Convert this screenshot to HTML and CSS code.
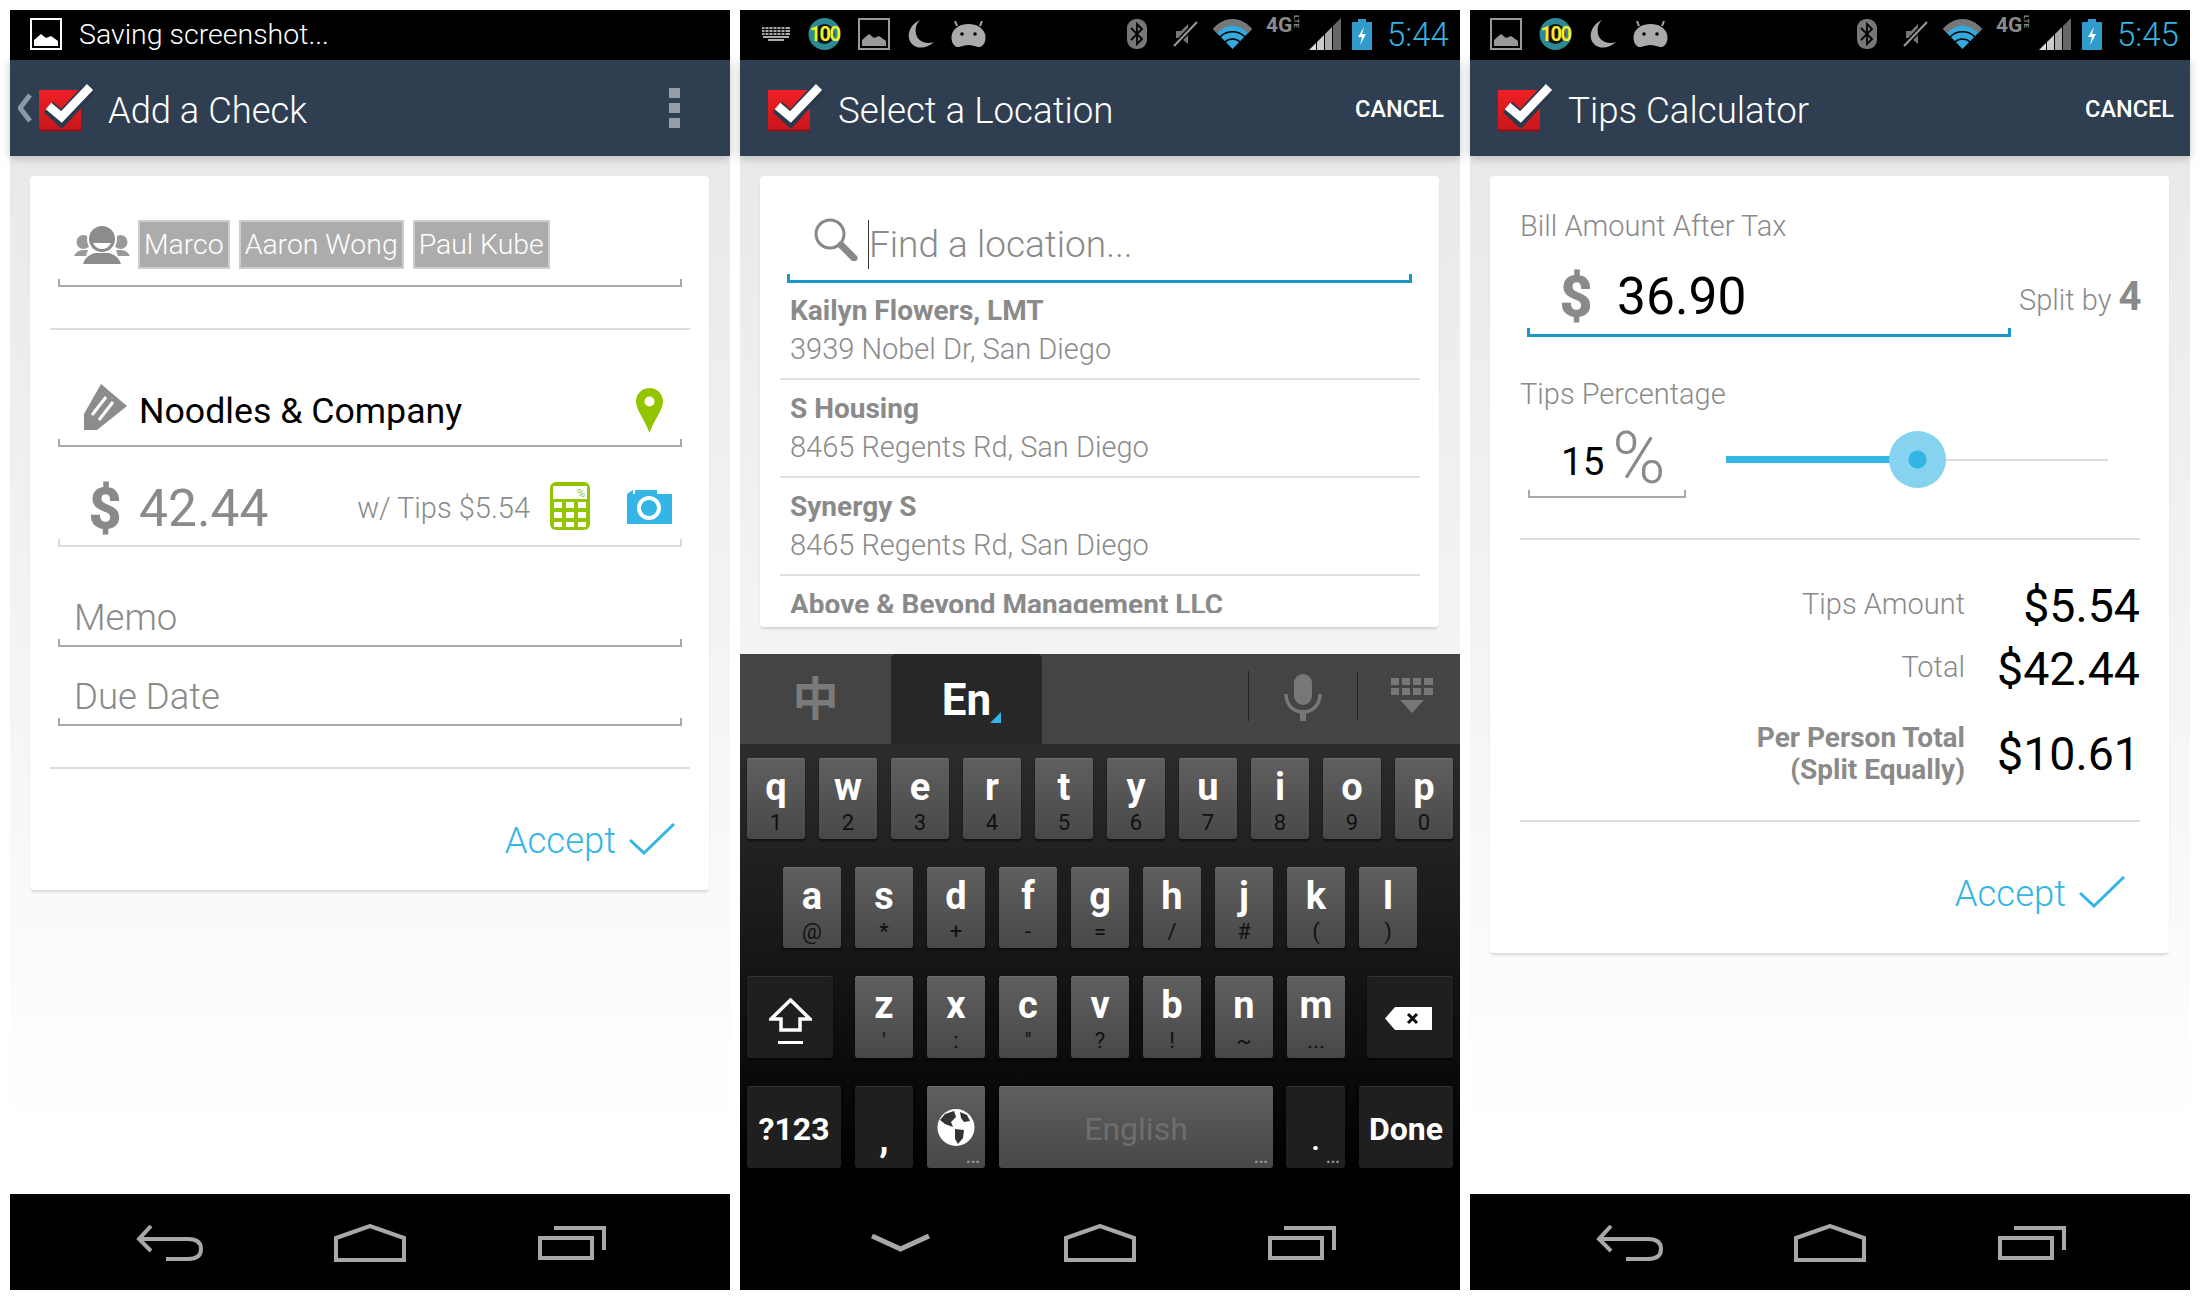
FILE: index.html
```html
<!DOCTYPE html>
<html lang="en">
<head>
<meta charset="UTF-8">
<meta name="viewport" content="width=device-width, initial-scale=1.0">
<title>Check app screens</title>
<link rel="stylesheet" href="styles.css">
</head>
<body>

<!-- shared icons -->
<svg class="defs" aria-hidden="true">
  <defs>
    <linearGradient id="red" x1="0" y1="0" x2="0" y2="1">
      <stop offset="0" stop-color="#ee2024"/>
      <stop offset="1" stop-color="#c8161b"/>
    </linearGradient>
    <symbol id="i-logo" viewBox="0 0 56 48">
      <rect x="0" y="6" width="42" height="41" fill="url(#red)"/>
      <path d="M0 46.5h42" stroke="#8c1216" stroke-width="2"/>
      <path d="M9.5 23 L22.5 35 L51 4" fill="none" stroke="#2a3a4c" stroke-width="14"/>
      <path d="M9.5 22 L22.5 33 L51 3" fill="none" stroke="#fff" stroke-width="8.5"/>
    </symbol>
    <symbol id="i-image" viewBox="0 0 32 32">
      <rect x="1" y="1" width="30" height="30" fill="none" stroke="currentColor" stroke-width="2"/>
      <path d="M4 28 V22 L11 16 L16 20 L21 18 L28 23 V28 Z" fill="currentColor"/>
    </symbol>
    <symbol id="i-100" viewBox="0 0 33 32">
      <circle cx="16.500" cy="16" r="16" fill="#2c8a96"/>
      <circle cx="16.500" cy="16" r="10" fill="#111"/>
      <text x="16.500" y="23" text-anchor="middle" class="badge-text">100</text>
    </symbol>
    <symbol id="i-moon" viewBox="0 0 27 28">
      <path d="M13 0 C3 4 -2 17 5 24 C11 30 21 28 27 22 C18 25 11 21 9 14 C8 8 9 4 13 0 Z" fill="#aaa"/>
    </symbol>
    <symbol id="i-droid" viewBox="0 0 35 27">
      <path d="M6 5 L4 0 M29 5 L31 0" stroke="#aaa" stroke-width="2"/>
      <path d="M17.500 3 C26 3 32 7 34 13 C36 20 32 27 27 26 C23 25 21 24 17.500 24 C14 24 12 25 8 26 C3 27 -1 20 1 13 C3 7 9 3 17.500 3 Z" fill="#aaa"/>
      <circle cx="11" cy="13" r="1.800" fill="#000"/>
      <circle cx="24" cy="13" r="1.800" fill="#000"/>
    </symbol>
    <symbol id="i-bt" viewBox="0 0 20 30">
      <rect x="0" y="0" width="20" height="30" rx="9" fill="#777"/>
      <path d="M4 9 L15 20 L10 25 V5 L15 10 L4 21" fill="none" stroke="#000" stroke-width="1.800"/>
    </symbol>
    <symbol id="i-mute" viewBox="0 0 25 26">
      <path d="M3 10 H8 L15 3 V23 L8 17 H3 Z" fill="#777"/>
      <path d="M1 25 L24 1" stroke="#000" stroke-width="5"/>
      <path d="M1 25 L24 1" stroke="#999" stroke-width="2"/>
    </symbol>
    <symbol id="i-wifi" viewBox="0 0 39 30">
      <path d="M19.500 30 L0 10 C11 -3 28 -3 39 10 Z" fill="#33a9dc"/>
      <path d="M0 10 C11 -3 28 -3 39 10 L35 14 C25 4 14 4 4 14 Z" fill="#777"/>
      <path d="M7 18 C14 11 25 11 32 18 M12 23 C16 19 23 19 27 23" fill="none" stroke="#000" stroke-width="1.500"/>
    </symbol>
    <symbol id="i-signal" viewBox="0 0 32 32">
      <path d="M0 32 L7 25 V32 Z" fill="#ddd"/>
      <path d="M8 24 L15 17 V32 H8 Z" fill="#ccc"/>
      <path d="M16 16 L23 9 V32 H16 Z" fill="#aaa"/>
      <path d="M24 8 L32 0 V32 H24 Z" fill="#666"/>
    </symbol>
    <symbol id="i-battery" viewBox="0 0 20 31">
      <path d="M6 0 H14 V3 H20 V31 H0 V3 H6 Z" fill="#319ccb"/>
      <path d="M12 8 L6 18 H10 L8 26 L14 15 H10 Z" fill="#fff"/>
    </symbol>
    <symbol id="i-back" viewBox="0 0 68 36">
      <path d="M15 1 L3 14 L15 26 M3 14 H52 Q65 14 65 24 Q65 34 52 34 H30" fill="none" stroke="#a8a8a8" stroke-width="4"/>
    </symbol>
    <symbol id="i-home" viewBox="0 0 72 38">
      <path d="M2 36 V14 L36 2 L70 14 V36 Z" fill="none" stroke="#a8a8a8" stroke-width="4"/>
    </symbol>
    <symbol id="i-recent" viewBox="0 0 68 34">
      <rect x="2" y="12" width="52" height="20" fill="none" stroke="#a8a8a8" stroke-width="4"/>
      <path d="M16 2 H66 V24" fill="none" stroke="#a8a8a8" stroke-width="4"/>
    </symbol>
    <symbol id="i-check" viewBox="0 0 46 32">
      <path d="M1 17 L15 30 L45 1" fill="none" stroke="#33b5e5" stroke-width="3"/>
    </symbol>
    <symbol id="i-dollar" viewBox="0 0 34 55">
      <text x="17" y="47" text-anchor="middle" class="dollar-text">$</text>
    </symbol>
  </defs>
</svg>

<div class="phones">

  <!-- add a check -->
  <div class="phone">
    <div class="status">
      <svg class="ic-image status-white"><use href="#i-image"/></svg>
      <span class="status-note">Saving screenshot...</span>
    </div>
    <header class="actionbar">
      <svg class="up-arrow" viewBox="0 0 15 28"><path d="M12 1 L2 14 L12 27" fill="none" stroke="#8b97a3" stroke-width="5"/></svg>
      <svg class="logo"><use href="#i-logo"/></svg>
      <h1 class="title title-up">Add a Check</h1>
      <div class="overflow"><i></i><i></i><i></i></div>
    </header>
    <main class="content">
      <section class="card card-check">
        <div class="field field-people">
          <svg class="ic-people" viewBox="0 0 56 38">
            <circle cx="9.500" cy="16" r="7" fill="#999"/>
            <circle cx="46.500" cy="16" r="7" fill="#999"/>
            <path d="M0 30 Q3 24 9 24 L14 24 L12 30 Z M56 30 Q53 24 47 24 L42 24 L44 30 Z" fill="#999"/>
            <circle cx="28" cy="13" r="15" fill="#fff"/>
            <circle cx="28" cy="13" r="13" fill="#8c8c8c"/>
            <path d="M19 17 H37 Q34 23 28 23 Q22 23 19 17 Z" fill="#fff"/>
            <path d="M9 38 Q12 29 21 27 L35 27 Q44 29 47 38 Z" fill="#8c8c8c"/>
          </svg>
          <span class="chip">Marco</span>
          <span class="chip">Aaron Wong</span>
          <span class="chip">Paul Kube</span>
        </div>
        <hr class="divider divider-people">
        <div class="field field-place">
          <svg class="ic-tag" viewBox="0 0 43 46">
            <path d="M17 0 L43 22 L13 46 H0 V30 Z" fill="#8c8c8c"/>
            <path d="M8 31 L22 13 M15 36 L29 18" stroke="#fff" stroke-width="3"/>
          </svg>
          <span class="place-name">Noodles &amp; Company</span>
          <svg class="ic-pin" viewBox="0 0 27 45">
            <path d="M13.500 0 C21 0 27 6 27 13.500 C27 22 18 32 13.500 45 C9 32 0 22 0 13.500 C0 6 6 0 13.500 0 Z" fill="#93c400"/>
            <circle cx="13.500" cy="13.500" r="5" fill="#fff"/>
          </svg>
        </div>
        <div class="field field-amount">
          <svg class="ic-dollar"><use href="#i-dollar"/></svg>
          <span class="amount-value">42.44</span>
          <span class="amount-tips">w/ Tips $5.54</span>
          <svg class="ic-calc" viewBox="0 0 40 48">
            <rect width="40" height="48" rx="6" fill="#93c400"/>
            <rect x="3" y="4" width="34" height="13" fill="#fff"/>
            <text x="31" y="15" text-anchor="middle" class="calc-text">%</text>
            <g fill="#fff">
              <rect x="4" y="20" width="8" height="6"/><rect x="16" y="20" width="8" height="6"/><rect x="28" y="20" width="8" height="6"/>
              <rect x="4" y="30" width="8" height="6"/><rect x="16" y="30" width="8" height="6"/><rect x="28" y="30" width="8" height="6"/>
              <rect x="4" y="40" width="8" height="5"/><rect x="16" y="40" width="8" height="5"/><rect x="28" y="40" width="8" height="5"/>
            </g>
          </svg>
          <svg class="ic-camera" viewBox="0 0 45 35">
            <path d="M0 5 L6 1 V5 H8 V1 H30 V5 H45 V35 H0 Z" fill="#33b5e5"/>
            <circle cx="22" cy="19" r="10" fill="#33b5e5" stroke="#fff" stroke-width="4"/>
          </svg>
        </div>
        <div class="field field-text field-memo">Memo</div>
        <div class="field field-text field-due">Due Date</div>
        <hr class="divider divider-due">
        <div class="accept accept-check">Accept <svg class="ic-check"><use href="#i-check"/></svg></div>
      </section>
    </main>
    <nav class="navbar">
      <span class="nav-slot"><svg class="ic-back"><use href="#i-back"/></svg></span>
      <span class="nav-slot"><svg class="ic-home"><use href="#i-home"/></svg></span>
      <span class="nav-slot"><svg class="ic-recent"><use href="#i-recent"/></svg></span>
    </nav>
  </div>

  <!-- select a location -->
  <div class="phone">
    <div class="status">
      <svg class="ic-keys" viewBox="0 0 28 14">
        <g fill="#aaa">
          <rect width="28" height="2"/><rect y="3" width="28" height="2"/><rect y="6" width="28" height="2"/><rect x="1" y="9" width="26" height="2"/><rect x="6" y="12" width="16" height="2"/>
        </g>
        <path d="M3 0V9M7 0V9M11 0V9M15 0V9M19 0V9M23 0V9" stroke="#000"/>
      </svg>
      <svg class="ic-100"><use href="#i-100"/></svg>
      <svg class="ic-image"><use href="#i-image"/></svg>
      <svg class="ic-moon"><use href="#i-moon"/></svg>
      <svg class="ic-droid"><use href="#i-droid"/></svg>
      <div class="status-right">
        <svg class="ic-bt"><use href="#i-bt"/></svg>
        <svg class="ic-mute"><use href="#i-mute"/></svg>
        <svg class="ic-wifi"><use href="#i-wifi"/></svg>
        <span class="net">4G<small>LTE</small></span>
        <svg class="ic-signal"><use href="#i-signal"/></svg>
        <svg class="ic-battery"><use href="#i-battery"/></svg>
        <span class="clock">5:44</span>
      </div>
    </div>
    <header class="actionbar">
      <svg class="logo"><use href="#i-logo"/></svg>
      <h1 class="title">Select a Location</h1>
      <span class="cancel">CANCEL</span>
    </header>
    <main class="content">
      <section class="card card-location">
        <div class="field field-active field-search">
          <svg class="ic-search" viewBox="0 0 44 43">
            <circle cx="16" cy="16" r="14" fill="none" stroke="#888" stroke-width="3"/>
            <path d="M27 27 L40 40" stroke="#888" stroke-width="7" stroke-linecap="round"/>
          </svg>
          <span class="search-text">Find a location...</span>
        </div>
        <ul class="results">
          <li><b>Kailyn Flowers, LMT</b><span>3939 Nobel Dr, San Diego</span></li>
          <li><b>S Housing</b><span>8465 Regents Rd, San Diego</span></li>
          <li><b>Synergy S</b><span>8465 Regents Rd, San Diego</span></li>
          <li><b>Above &amp; Beyond Management LLC</b></li>
        </ul>
      </section>
    </main>
    <div class="keyboard">
      <div class="kb-bar">
        <span class="kb-tab kb-zh">中</span>
        <span class="kb-tab kb-en">En</span>
        <span class="kb-sep kb-sep-first"></span>
        <svg class="ic-mic" viewBox="0 0 38 47">
          <rect x="10" y="0" width="18" height="31" rx="9" fill="#777"/>
          <path d="M2 20 C2 44 36 44 36 20" fill="none" stroke="#777" stroke-width="3.500"/>
          <rect x="16" y="36" width="6" height="11" fill="#777"/>
        </svg>
        <span class="kb-sep kb-sep-last"></span>
        <svg class="ic-hide" viewBox="0 0 42 35">
          <g fill="#777">
            <rect width="8" height="7"/><rect x="11" width="8" height="7"/><rect x="22" width="8" height="7"/><rect x="33" width="9" height="7"/>
            <rect y="10" width="8" height="7"/><rect x="11" y="10" width="8" height="7"/><rect x="22" y="10" width="8" height="7"/><rect x="33" y="10" width="9" height="7"/>
            <path d="M9 22 H33 L21 35 Z"/>
          </g>
        </svg>
      </div>
      <div class="kb-keys">
        <div class="kb-row">
          <span class="key">q<small>1</small></span><span class="key">w<small>2</small></span><span class="key">e<small>3</small></span><span class="key">r<small>4</small></span><span class="key">t<small>5</small></span><span class="key">y<small>6</small></span><span class="key">u<small>7</small></span><span class="key">i<small>8</small></span><span class="key">o<small>9</small></span><span class="key">p<small>0</small></span>
        </div>
        <div class="kb-row kb-row-home">
          <span class="key">a<small>@</small></span><span class="key">s<small>*</small></span><span class="key">d<small>+</small></span><span class="key">f<small>-</small></span><span class="key">g<small>=</small></span><span class="key">h<small>/</small></span><span class="key">j<small>#</small></span><span class="key">k<small>(</small></span><span class="key">l<small>)</small></span>
        </div>
        <div class="kb-row kb-row-tall">
          <span class="key key-dark key-shift">
            <svg class="ic-shift" viewBox="0 0 43 46">
              <path d="M21.500 2 L41 21 H31 V32 H12 V21 H2 Z" fill="none" stroke="#fff" stroke-width="3.500"/>
              <rect x="9" y="43" width="25" height="3" fill="#fff"/>
            </svg>
          </span>
          <span class="key">z<small>'</small></span><span class="key">x<small>:</small></span><span class="key">c<small>"</small></span><span class="key">v<small>?</small></span><span class="key">b<small>!</small></span><span class="key">n<small>~</small></span><span class="key">m<small>...</small></span>
          <span class="key key-dark key-del">
            <svg class="ic-del" viewBox="0 0 47 23">
              <path d="M10 0 H47 V23 H10 L0 11.500 Z" fill="#fff"/>
              <path d="M23 7 L32 16 M32 7 L23 16" stroke="#111" stroke-width="3"/>
            </svg>
          </span>
        </div>
        <div class="kb-row kb-row-tall">
          <span class="key key-dark key-wide">?123</span>
          <span class="key key-dark key-comma">,</span>
          <span class="key key-globe">
            <svg class="ic-globe" viewBox="0 0 38 37">
              <circle cx="19" cy="18.500" r="18.500" fill="#fff"/>
              <path d="M8 5 L17 2 L19 8 L14 13 L16 18 L8 15 L3 11 Z M18 20 L27 21 L26 29 L21 35 L18 30 Z M23 3 L30 6 L33 12 L27 13 L24 9 Z" fill="#333"/>
            </svg>
            <em class="more">...</em>
          </span>
          <span class="key key-space">English<em class="more">...</em></span>
          <span class="key key-dark key-period">.<em class="more">...</em></span>
          <span class="key key-dark key-wide">Done</span>
        </div>
      </div>
    </div>
    <nav class="navbar">
      <span class="nav-slot">
        <svg class="ic-down" viewBox="0 0 59 18"><path d="M1 2 L29.500 15 L58 2" fill="none" stroke="#a8a8a8" stroke-width="5"/></svg>
      </span>
      <span class="nav-slot"><svg class="ic-home"><use href="#i-home"/></svg></span>
      <span class="nav-slot"><svg class="ic-recent"><use href="#i-recent"/></svg></span>
    </nav>
  </div>

  <!-- tips calculator -->
  <div class="phone">
    <div class="status">
      <svg class="ic-image"><use href="#i-image"/></svg>
      <svg class="ic-100"><use href="#i-100"/></svg>
      <svg class="ic-moon"><use href="#i-moon"/></svg>
      <svg class="ic-droid"><use href="#i-droid"/></svg>
      <div class="status-right">
        <svg class="ic-bt"><use href="#i-bt"/></svg>
        <svg class="ic-mute"><use href="#i-mute"/></svg>
        <svg class="ic-wifi"><use href="#i-wifi"/></svg>
        <span class="net">4G<small>LTE</small></span>
        <svg class="ic-signal"><use href="#i-signal"/></svg>
        <svg class="ic-battery"><use href="#i-battery"/></svg>
        <span class="clock">5:45</span>
      </div>
    </div>
    <header class="actionbar">
      <svg class="logo"><use href="#i-logo"/></svg>
      <h1 class="title">Tips Calculator</h1>
      <span class="cancel">CANCEL</span>
    </header>
    <main class="content">
      <section class="card card-tips">
        <div class="tips-label tips-label-bill">Bill Amount After Tax</div>
        <div class="bill-row">
          <div class="field field-active field-bill">
            <svg class="ic-dollar"><use href="#i-dollar"/></svg>
            <span class="bill-value">36.90</span>
          </div>
          <div class="split">Split by <b>4</b></div>
        </div>
        <div class="tips-label tips-label-pct">Tips Percentage</div>
        <div class="pct-row">
          <div class="field field-pct">
            <span class="pct-value">15</span><span class="pct-sign">%</span>
          </div>
          <div class="slider">
            <span class="slider-fill"></span>
            <span class="slider-rest"></span>
            <span class="slider-thumb"></span>
          </div>
        </div>
        <hr class="divider divider-tips">
        <div class="summary">
          <span class="sum-label">Tips Amount</span><span class="sum-value">$5.54</span>
          <span class="sum-label">Total</span><span class="sum-value">$42.44</span>
          <span class="sum-label sum-person">Per Person Total<br>(Split Equally)</span><span class="sum-value sum-person-value">$10.61</span>
        </div>
        <hr class="divider divider-tips divider-summary">
        <div class="accept accept-tips">Accept <svg class="ic-check"><use href="#i-check"/></svg></div>
      </section>
    </main>
    <nav class="navbar">
      <span class="nav-slot"><svg class="ic-back"><use href="#i-back"/></svg></span>
      <span class="nav-slot"><svg class="ic-home"><use href="#i-home"/></svg></span>
      <span class="nav-slot"><svg class="ic-recent"><use href="#i-recent"/></svg></span>
    </nav>
  </div>

</div>
</body>
</html>
```

FILE: styles.css
```css
:root {
  --bar: #2f3f51;
  --blue: #33b5e5;
  --green: #93c400;
  --grey-text: #8a8a8a;
  --rule: #dcdcdc;
}

body {
  margin: 0;
  padding: 10px;
  background: #fff;
  font-family: Roboto, "Liberation Sans", "Noto Sans CJK SC", sans-serif;
}

.defs {
  display: block;
  width: 0;
  height: 0;
}

.phones {
  display: flex;
  gap: 10px;
}

.phone {
  width: 720px;
  height: 1280px;
  display: flex;
  flex-direction: column;
  background: linear-gradient(#e9e9e9 146px, #f3f3f3 600px, #fff 1130px);
}

/* status bar */
.status {
  height: 50px;
  flex: none;
  display: flex;
  align-items: center;
  gap: 17px;
  padding-left: 20px;
  padding-bottom: 2px;
  box-sizing: border-box;
  background: #000;
  color: #999;
}

.status-note {
  color: #fff;
  font-size: 28.500px;
  font-weight: 300;
}

.status-white {
  color: #fff;
}

.status-right {
  margin-left: auto;
  padding-right: 13px;
  display: flex;
  align-items: center;
}

.ic-image { width: 32px; height: 32px; }
.ic-100 { width: 33px; height: 32px; }
.ic-moon { width: 27px; height: 28px; }
.ic-droid { width: 35px; height: 27px; }
.ic-keys { width: 28px; height: 14px; margin-left: 2px; margin-right: 1px; }
.ic-bt { width: 20px; height: 30px; }
.ic-mute { width: 25px; height: 26px; margin-left: 26px; }
.ic-wifi { width: 39px; height: 30px; margin-left: 15px; }
.ic-signal { width: 32px; height: 32px; margin-left: 5px; }
.ic-battery { width: 20px; height: 31px; margin-left: 11px; }

.badge-text {
  fill: #f5ee2a;
  font-size: 20px;
  font-weight: 700;
  letter-spacing: -1.500px;
}

.net {
  width: 38px;
  margin-left: 14px;
  align-self: flex-start;
  display: flex;
  color: #8a8a8a;
  font-size: 21px;
  font-weight: 700;
  line-height: 20px;
}

.net small {
  writing-mode: vertical-rl;
  font-size: 8px;
  line-height: 9px;
  letter-spacing: 0;
}

.clock {
  width: 60px;
  margin-left: 15px;
  color: var(--blue);
  font-size: 33px;
  font-weight: 300;
  white-space: nowrap;
}

/* action bar */
.actionbar {
  position: relative;
  height: 96px;
  flex: none;
  display: flex;
  align-items: center;
  padding-left: 28px;
  padding-right: 12px;
  background: var(--bar);
  box-shadow: 0 2px 9px rgba(0, 0, 0, 0.22);
  color: #fff;
}

.logo {
  width: 56px;
  height: 48px;
  flex: none;
}

.title {
  margin: 4px 0 0 14px;
  font-size: 36.700px;
  font-weight: 300;
}

.title-up {
  margin-left: 13px;
  font-size: 36.300px;
}

.up-arrow {
  width: 15px;
  height: 28px;
  margin-left: -20px;
  margin-right: 6px;
}

.overflow {
  margin-left: auto;
  margin-right: 38px;
  display: flex;
  flex-direction: column;
  gap: 5px;
}

.overflow i {
  display: block;
  width: 11px;
  height: 10px;
  background: #949ca6;
}

.cancel {
  margin-left: auto;
  margin-top: 2px;
  margin-right: 4px;
  font-size: 23.500px;
  font-weight: 500;
}

/* cards and fields */
.content {
  padding: 20px 21px 0 20px;
}

.card {
  background: #fff;
  border-radius: 4px;
  box-shadow: 0 3px 3px -1px rgba(0, 0, 0, 0.14);
  overflow: hidden;
}

.divider {
  height: 2px;
  margin: 0 19px 0 20px;
  border: 0;
  background: var(--rule);
}

.field {
  --line: #a9a9a9;
  --line-w: 2px;
  --tick: 8px;
  display: flex;
  align-items: center;
  box-sizing: border-box;
  background:
    linear-gradient(var(--line), var(--line)) left bottom / var(--line-w) var(--tick) no-repeat,
    linear-gradient(var(--line), var(--line)) right bottom / var(--line-w) var(--tick) no-repeat,
    linear-gradient(var(--line), var(--line)) left bottom / 100% var(--line-w) no-repeat;
}

.field-active {
  --line: #1a97c6;
  --line-w: 3px;
  --tick: 9px;
}

.card-check .field {
  margin: 0 27px 0 28px;
}

.card-check .field-people {
  margin-top: 44px;
  height: 67px;
  padding-left: 16px;
  align-items: flex-start;
  gap: 9px;
}

.ic-people {
  width: 56px;
  height: 38px;
  margin-top: 6px;
  margin-right: -1px;
}

.chip {
  height: 49px;
  padding: 0 4px;
  box-sizing: border-box;
  border: 2px solid #cdcdcd;
  background: #acacac;
  color: #fff;
  font-size: 28.400px;
  font-weight: 300;
  line-height: 45px;
}

.divider-people {
  margin-top: 41px;
}

.card-check .field-place {
  margin-top: 45px;
  height: 72px;
  padding-left: 26px;
  padding-right: 19px;
}

.ic-tag {
  width: 43px;
  height: 46px;
  flex: none;
  margin-bottom: 8px;
}

.place-name {
  margin-left: 12px;
  color: #000;
  font-size: 35.700px;
  font-weight: 400;
}

.ic-pin {
  width: 27px;
  height: 45px;
  margin-left: auto;
  margin-bottom: 2px;
}

.card-check .field-amount {
  --line: #dcdcdc;
  margin-top: 10px;
  height: 90px;
  padding-left: 30px;
  padding-top: 12px;
}

.ic-dollar {
  width: 34px;
  height: 55px;
  flex: none;
}

.dollar-text {
  fill: #8a8a8a;
  stroke: #8a8a8a;
  stroke-width: 1.200px;
  font-size: 56px;
  font-weight: 700;
}

.amount-value {
  margin-left: 17px;
  color: #8a8a8a;
  font-size: 51.500px;
  font-weight: 400;
}

.amount-tips {
  margin-left: auto;
  color: var(--grey-text);
  font-size: 29px;
  font-weight: 300;
}

.ic-calc {
  width: 40px;
  height: 48px;
  margin-left: 20px;
  margin-bottom: 4px;
}

.calc-text {
  fill: var(--green);
  font-size: 11px;
}

.ic-camera {
  width: 45px;
  height: 35px;
  margin-left: 37px;
  margin-right: 10px;
  margin-bottom: 4px;
}

.field-text {
  align-items: flex-end;
  padding-left: 16px;
  padding-bottom: 8px;
  color: var(--grey-text);
  font-size: 36.500px;
  font-weight: 300;
}

.card-check .field-memo {
  height: 100px;
}

.card-check .field-due {
  height: 79px;
}

.divider-due {
  margin-top: 41px;
}

.accept {
  display: flex;
  justify-content: flex-end;
  align-items: center;
  gap: 13px;
  color: var(--blue);
  font-size: 36.500px;
  font-weight: 300;
  line-height: 42px;
}

.accept-check {
  padding: 51px 34px 28px 0;
}

.ic-check {
  width: 46px;
  height: 32px;
  margin-bottom: 4px;
}

/* location search */
.card-location {
  padding-bottom: 14px;
}

.field-search {
  margin: 34px 27px 0;
  height: 73px;
  padding-left: 27px;
  padding-bottom: 4px;
}

.ic-search {
  width: 44px;
  height: 43px;
  flex: none;
  margin-bottom: 10px;
}

.search-text {
  margin-left: 10px;
  padding-left: 0;
  border-left: 1px solid #333;
  color: var(--grey-text);
  font-size: 37px;
  font-weight: 300;
  line-height: 49px;
}

.results {
  height: 331px;
  margin: -1px 19px 0 20px;
  padding: 0;
  list-style: none;
  overflow: hidden;
}

.results li {
  height: 98px;
  box-sizing: border-box;
  padding: 10px 0 0 10px;
  border-bottom: 2px solid #e0e0e0;
  color: var(--grey-text);
  font-size: 29px;
  line-height: 38px;
}

.results b,
.results span {
  display: block;
}

.results b {
  font-size: 28px;
  font-weight: 700;
}

.results span {
  font-weight: 300;
}

/* keyboard */
.keyboard {
  height: 540px;
  flex: none;
  margin-top: auto;
  background: linear-gradient(#2c2c2c 90px, #000 520px);
}

.kb-bar {
  height: 90px;
  display: flex;
  align-items: center;
  background: #444;
}

.kb-tab {
  width: 151px;
  height: 90px;
  text-align: center;
  font-weight: 700;
  line-height: 90px;
}

.kb-zh {
  color: #7a7a7a;
  font-size: 46px;
}

.kb-en {
  position: relative;
  border-radius: 5px 5px 0 0;
  background: #272727;
  color: #fff;
  font-size: 44px;
  line-height: 92px;
}

/* little blue corner of the active tab */
.kb-en::after {
  content: "";
  position: absolute;
  left: 99px;
  top: 58px;
  border-left: 11px solid transparent;
  border-bottom: 11px solid var(--blue);
}

.kb-sep {
  width: 1px;
  height: 50px;
  margin-top: -6px;
  background: #222;
}

.kb-sep-first {
  margin-left: 206px;
}

.ic-mic {
  width: 38px;
  height: 47px;
  margin: -4px 35px 0;
}

.ic-hide {
  width: 42px;
  height: 35px;
  margin-left: 33px;
  margin-top: -8px;
}

.kb-keys {
  display: flex;
  flex-direction: column;
  gap: 28px;
  padding: 14px 7px 0;
}

.kb-row {
  height: 81px;
  display: flex;
  gap: 14px;
}

.kb-row-home {
  padding-left: 36px;
}

.kb-row-tall {
  height: 82px;
}

.key {
  position: relative;
  width: 58px;
  flex: none;
  display: flex;
  flex-direction: column;
  align-items: center;
  box-sizing: border-box;
  padding-top: 6px;
  border-radius: 3px;
  background: linear-gradient(#5f5f5f, #484848);
  box-shadow: inset 0 1px 0 #6e6e6e, 0 2px 2px rgba(0, 0, 0, 0.5);
  color: #fff;
  font-size: 38px;
  font-weight: 700;
  line-height: 46px;
}

.key small {
  color: #111;
  font-size: 22px;
  font-weight: 400;
  line-height: 26px;
}

.key-dark {
  justify-content: center;
  padding-top: 0;
  background: #1f1f1f;
  box-shadow: inset 0 1px 0 #333, 0 2px 2px rgba(0, 0, 0, 0.6);
}

.key-shift {
  width: 86px;
  margin-right: 8px;
}

.key-del {
  width: 86px;
  margin-left: 8px;
}

.ic-shift {
  width: 43px;
  height: 46px;
  margin-top: 8px;
}

.ic-del {
  width: 47px;
  height: 23px;
  margin-left: -4px;
  margin-top: 2px;
}

.key-wide {
  width: 94px;
  padding-top: 3px;
  font-size: 32px;
}

.key-comma {
  justify-content: flex-end;
  padding-bottom: 6px;
}

.key-globe {
  justify-content: center;
  padding-top: 0;
}

.ic-globe {
  width: 38px;
  height: 37px;
}

.key-space {
  width: 274px;
  justify-content: center;
  padding-top: 3px;
  color: #6e6e6e;
  font-size: 32px;
  font-weight: 400;
}

.key-period {
  width: 59px;
  margin-left: -1px;
  justify-content: flex-end;
  padding-bottom: 4px;
  font-size: 28px;
}

.more {
  position: absolute;
  right: 5px;
  bottom: 2px;
  color: #9a9a9a;
  font-size: 16px;
  font-style: normal;
  font-weight: 700;
  line-height: 16px;
}

/* nav bar */
.navbar {
  height: 96px;
  flex: none;
  margin-top: auto;
  padding-left: 60px;
  padding-top: 2px;
  box-sizing: border-box;
  display: flex;
  background: #000;
}

.keyboard + .navbar {
  margin-top: 0;
}

.nav-slot {
  width: 200px;
  display: flex;
  align-items: center;
  justify-content: center;
}

.ic-back { width: 68px; height: 36px; }
.ic-home { width: 72px; height: 38px; }
.ic-recent { width: 68px; height: 34px; margin-left: 4px; }
.ic-down { width: 59px; height: 18px; }

/* tips calculator */
.card-tips {
  padding-bottom: 38px;
}

.tips-label {
  padding-left: 30px;
  color: var(--grey-text);
  font-size: 29px;
  font-weight: 300;
  line-height: 34px;
}

.tips-label-bill {
  margin-top: 33px;
}

.bill-row {
  display: flex;
  align-items: flex-start;
}

.field-bill {
  width: 484px;
  height: 94px;
  margin-left: 37px;
  padding-left: 32px;
  padding-top: 12px;
}

.bill-value {
  margin-left: 24px;
  color: #000;
  font-size: 51.500px;
}

.split {
  margin-left: 8px;
  margin-top: 30px;
  color: var(--grey-text);
  font-size: 29px;
  font-weight: 300;
}

.split b {
  margin-left: 0;
  font-size: 40px;
  font-weight: 700;
}

.tips-label-pct {
  margin-top: 40px;
}

.pct-row {
  display: flex;
  align-items: flex-start;
}

.field-pct {
  width: 158px;
  height: 87px;
  margin-left: 38px;
  padding-left: 33px;
  padding-top: 14px;
}

.pct-value {
  color: #000;
  font-size: 38.500px;
}

.pct-sign {
  margin-left: 8px;
  margin-top: -6px;
  color: var(--grey-text);
  font-size: 72px;
  font-weight: 300;
  line-height: 70px;
}

.slider {
  position: relative;
  width: 382px;
  height: 57px;
  margin: 20px 0 0 40px;
  display: flex;
  align-items: center;
}

.slider-fill {
  width: 191px;
  height: 7px;
  background: var(--blue);
}

.slider-rest {
  flex: 1;
  height: 2px;
  background: #ddd;
}

/* the thumb sits on top of the track */
.slider-thumb {
  position: absolute;
  left: 163px;
  top: 0;
  width: 57px;
  height: 57px;
  border-radius: 50%;
  background: radial-gradient(circle, var(--blue) 8.500px, #86d3f0 9.500px);
}

.divider-tips {
  margin: 40px 29px 0 30px;
}

.summary {
  display: grid;
  grid-template-columns: 475px 175px;
  align-items: center;
  padding-top: 40px;
  row-gap: 11px;
}

.sum-label {
  padding-bottom: 5px;
  text-align: right;
  color: var(--grey-text);
  font-size: 29px;
  font-weight: 300;
}

.sum-value {
  text-align: right;
  color: #000;
  font-size: 46.500px;
  line-height: 52px;
}

.sum-person {
  margin-top: 16px;
  padding-bottom: 0;
  font-size: 28px;
  font-weight: 700;
  line-height: 32px;
}

.sum-person-value {
  margin-top: 16px;
}

.divider-summary {
  margin-top: 34px;
}

.accept-tips {
  padding: 51px 44px 0 0;
}
```
